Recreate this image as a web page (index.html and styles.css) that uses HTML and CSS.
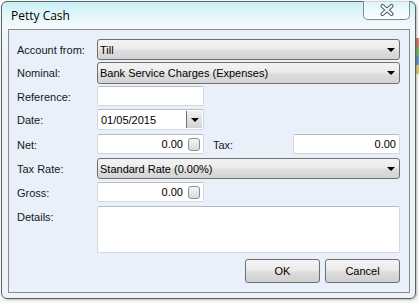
FILE: index.html
```html
<!DOCTYPE html>
<html lang="en">
<head>
<meta charset="UTF-8" />
<title>Petty Cash</title>
<link rel="stylesheet" href="styles.css">
</head>
<body>
<div class="desktop">
  <div class="desk-icon">
    <span class="c-red"></span><span class="c-green"></span><span class="c-blue"></span><span class="c-gold"></span>
  </div>

  <div class="window">
    <div class="titlebar">
      <span class="title">Petty Cash</span>
      <button class="close" title="Close">
        <svg width="14" height="12" viewBox="0 0 14 12">
          <path d="M2.5 2 L11.5 10 M11.5 2 L2.5 10" stroke="#4f5964" stroke-width="4" stroke-linecap="round" fill="none"/>
          <path d="M2.5 2 L11.5 10 M11.5 2 L2.5 10" stroke="#ffffff" stroke-width="2" stroke-linecap="round" fill="none"/>
        </svg>
      </button>
    </div>

    <div class="panel">
      <form class="form">
        <label class="lbl">Account from:</label>
        <div class="combo span-all"><span>Till</span><i class="arrow"></i></div>

        <label class="lbl">Nominal:</label>
        <div class="combo span-all tall"><span>Bank Service Charges (Expenses)</span><i class="arrow"></i></div>

        <label class="lbl">Reference:</label>
        <div class="text"></div>

        <label class="lbl">Date:</label>
        <div class="text date"><span>01/05/2015</span><span class="drop"><i class="arrow"></i></span></div>

        <label class="lbl">Net:</label>
        <div class="text num"><span>0.00</span><span class="chk"></span></div>
        <label class="lbl tax-lbl">Tax:</label>
        <div class="text num tax"><span>0.00</span></div>

        <label class="lbl">Tax Rate:</label>
        <div class="combo span-all"><span>Standard Rate (0.00%)</span><i class="arrow"></i></div>

        <label class="lbl">Gross:</label>
        <div class="text num"><span>0.00</span><span class="chk"></span></div>

        <label class="lbl">Details:</label>
        <div class="text details"></div>

        <div class="actions span-all">
          <button type="button" class="btn">OK</button>
          <button type="button" class="btn">Cancel</button>
        </div>
      </form>
    </div>
  </div>
</div>
</body>
</html>
```

FILE: styles.css
```css
body {
  margin: 0;
  background: #f6f7f8;
  font-family: "Liberation Sans", Arial, sans-serif;
  font-size: 11px;
  color: #000;
}
.desktop {
  position: relative;
  width: 419px;
  height: 303px;
  overflow: hidden;
}
/* bits of a desktop icon showing past the window edge */
.desk-icon {
  position: absolute;
  left: 414px;
  top: 38px;
  width: 6px;
  display: flex;
  flex-direction: column;
  opacity: 0.85;
}
.desk-icon span { height: 9px; }
.c-red { background: #d8674a; }
.c-green { background: #5fae58; }
.c-blue { background: #4f86c8; }
.c-gold { background: #e6bf55; }

.window {
  position: relative;
  box-sizing: border-box;
  margin: 1px 0 0 1px;
  width: 415px;
  height: 298px;
  border: 1px solid #5d6166;
  border-radius: 6px;
  padding: 0 5px 5px 6px;
  display: flex;
  flex-direction: column;
  background:
    linear-gradient(180deg, #c4eff5 0px, #ddf6f9 10px, #f3f8fb 24px, #eef2f6 60px, #eef2f6 100%);
  box-shadow: 1px 1px 2px rgba(0,0,0,0.25);
}
.titlebar {
  height: 27px;
  display: flex;
  justify-content: space-between;
  align-items: flex-start;
}
.title {
  font-family: "Open Sans", "Noto Sans", sans-serif;
  font-size: 12px;
  color: #000;
  margin: 5px 0 0 3px;
}
.close {
  margin-top: -1px;
  width: 47px;
  height: 19px;
  padding: 0;
  border: 1px solid #7d8a96;
  border-top: none;
  border-radius: 0 0 5px 5px;
  background: linear-gradient(180deg, rgba(255,255,255,0.35), rgba(255,255,255,0.75));
  display: flex;
  align-items: center;
  justify-content: center;
  box-shadow: inset 0 0 0 1px rgba(255,255,255,0.6);
}
.close svg { display: block; }

.panel {
  flex: 1;
  border: 1px solid #878c91;
  background: #e9f0f9;
  padding: 9px 8px 8px 8px;
}
.form {
  margin: 0;
  display: grid;
  grid-template-columns: 80px 107px 9px 80px 107px;
  grid-template-rows: 23px 24px 23px 25px 24px 24px 24px 53px 24px;
  align-items: start;
}
.lbl {
  grid-column: 1;
  height: 21px;
  display: flex;
  align-items: center;
  color: #101828;
}
.tax-lbl { grid-column: 4; }
.span-all { grid-column: 2 / 6; }

.combo {
  box-sizing: border-box;
  height: 21px;
  border: 1px solid #707070;
  border-radius: 3px;
  background: linear-gradient(180deg, #f3f3f3 0%, #ebebeb 45%, #dedede 55%, #d3d3d3 100%);
  display: flex;
  align-items: center;
  justify-content: space-between;
  padding: 0 4px 0 2px;
}
.combo.tall { height: 22px; }
.arrow {
  width: 0;
  height: 0;
  border-left: 4px solid transparent;
  border-right: 4px solid transparent;
  border-top: 4px solid #000;
}

.text {
  grid-column: 2;
  box-sizing: border-box;
  height: 20px;
  background: #fff;
  border: 1px solid #d3d7dd;
  border-top-color: #b6bcc4;
  border-radius: 2px;
  display: flex;
  align-items: center;
  padding: 0 3px;
}
.text.tax { grid-column: 5; }
.text.details {
  grid-column: 2 / 6;
  height: 47px;
}
.num { justify-content: flex-end; }
.num .chk {
  box-sizing: border-box;
  width: 12px;
  height: 13px;
  margin: 0 0 0 5px;
  border: 1px solid #8b8f94;
  border-radius: 3px;
  background: linear-gradient(180deg, #f5f5f5, #d9d9d9);
}
.num.tax { padding-right: 3px; }

.date {
  justify-content: space-between;
  height: 21px;
  padding-right: 0;
}
.date .drop {
  box-sizing: border-box;
  width: 16px;
  height: 17px;
  margin-right: 1px;
  border-left: 1px solid #6f6f6f;
  background: linear-gradient(180deg, #f0f0f0, #d4d4d4);
  display: flex;
  align-items: center;
  justify-content: center;
}

.actions {
  display: flex;
  justify-content: flex-end;
  gap: 5px;
}
.btn {
  width: 75px;
  height: 24px;
  border: 1px solid #707070;
  border-radius: 3px;
  background: linear-gradient(180deg, #f3f3f3 0%, #ebebeb 45%, #dddddd 55%, #cfcfcf 100%);
  font-family: "Liberation Sans", Arial, sans-serif;
  font-size: 11px;
  color: #000;
  padding: 0;
}
```
